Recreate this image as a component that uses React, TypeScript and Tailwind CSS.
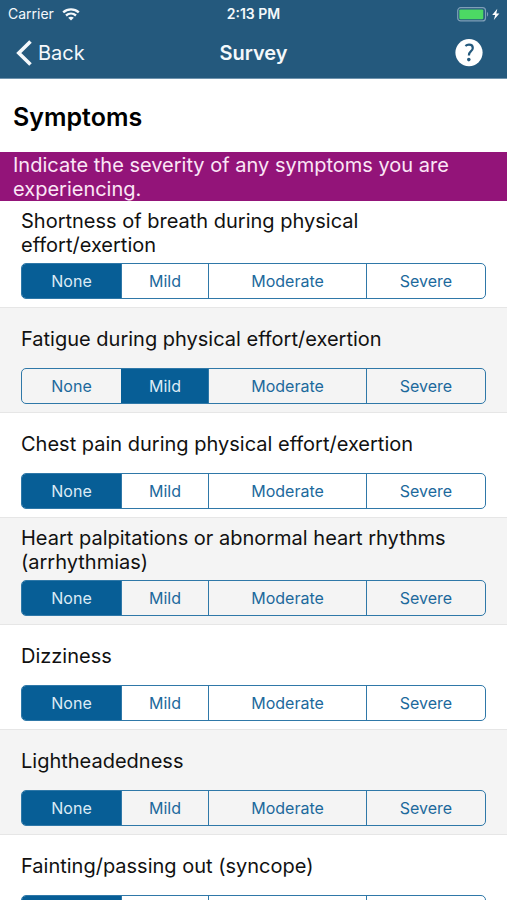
import { useState } from "react";

type Severity = "None" | "Mild" | "Moderate" | "Severe";

const LEVELS: Severity[] = ["None", "Mild", "Moderate", "Severe"];

const SYMPTOMS: { id: string; title: string; initial: Severity }[] = [
  { id: "breath", title: "Shortness of breath during physical effort/exertion", initial: "None" },
  { id: "fatigue", title: "Fatigue during physical effort/exertion", initial: "Mild" },
  { id: "chest", title: "Chest pain during physical effort/exertion", initial: "None" },
  { id: "heart", title: "Heart palpitations or abnormal heart rhythms (arrhythmias)", initial: "None" },
  { id: "dizziness", title: "Dizziness", initial: "None" },
  { id: "lightheaded", title: "Lightheadedness", initial: "None" },
  { id: "fainting", title: "Fainting/passing out (syncope)", initial: "None" },
];

function WifiIcon() {
  return (
    <svg className="h-[13px] w-[18px]" viewBox="0 0 18 13" fill="none" stroke="currentColor" strokeWidth="2.4" aria-hidden="true">
      <path d="M1.2 4.4C5.6.4 12.4.4 16.8 4.4" />
      <path d="M4 7.5c2.9-2.5 7.1-2.5 10 0" />
      <path d="M6.2 9.8c1.6-1.3 4-1.3 5.6 0L9 12.4z" fill="currentColor" stroke="none" />
    </svg>
  );
}

function BatteryIcon() {
  return (
    <svg className="h-[15px] w-[44px]" viewBox="0 0 44 15" aria-hidden="true">
      <rect x="0.7" y="0.7" width="27.8" height="13.2" rx="3" fill="none" stroke="#7f9fb8" strokeWidth="1.2" />
      <rect x="2.3" y="2.4" width="24" height="9.8" rx="1.2" fill="#4cd964" />
      <path d="M30 5c1.5.6 1.5 4 0 4.6z" fill="#7f9fb8" />
      <path d="M40.3 1.8 35.2 8h3l-1.4 5 5.6-6.6h-3.1z" fill="#fff" />
    </svg>
  );
}

function StatusBar() {
  return (
    <div className="grid h-7 grid-cols-[1fr_auto_1fr] items-center px-[6px] text-[14px] leading-5">
      <div className="flex items-center gap-2 pl-[2px]">
        <span>Carrier</span>
        <WifiIcon />
      </div>
      <span className="font-semibold">2:13 PM</span>
      <div className="flex justify-end">
        <BatteryIcon />
      </div>
    </div>
  );
}

function NavBar() {
  return (
    <nav className="grid h-[50px] grid-cols-[1fr_auto_1fr] items-center px-4">
      <button type="button" className="flex items-center gap-[6px] justify-self-start text-[20px] leading-6">
        <svg className="h-[26px] w-4" viewBox="0 0 16 26" fill="none" stroke="currentColor" strokeWidth="3.6" aria-hidden="true">
          <path d="M14.5 1.5 2.8 13l11.7 11.5" />
        </svg>
        Back
      </button>
      <h1 className="text-[20px] font-semibold leading-6">Survey</h1>
      <button type="button" aria-label="Help" className="justify-self-end px-2">
        <svg className="size-7" viewBox="0 0 28 28" aria-hidden="true">
          <circle cx="14" cy="13.6" r="13.6" fill="#fff" />
          <path
            d="M10.4 7c1-.9 2.2-1.3 3.6-1.3 2.3 0 3.8 1.3 3.8 3.2 0 1.5-.8 2.4-2 3.4-1.3 1.1-1.9 1.9-1.9 4.1"
            fill="none"
            stroke="#24597d"
            strokeWidth="2.2"
          />
          <circle cx="13.8" cy="20.6" r="1.8" fill="#24597d" />
        </svg>
      </button>
    </nav>
  );
}

function SymptomRow({ id, title, initial }: { id: string; title: string; initial: Severity }) {
  const [value, setValue] = useState<Severity>(initial);
  return (
    <li className="border-b border-[#e6e6e6] px-[21px] pb-2 odd:bg-white even:bg-[#f4f4f4]">
      <div className="flex min-h-[60px] items-center pb-[6px] pt-2">
        <h3 id={id} className="text-[20px] leading-6 text-[#111111]">
          {title}
        </h3>
      </div>
      <div
        role="radiogroup"
        aria-labelledby={id}
        className="grid h-9 grid-cols-[99fr_87fr_158fr_119fr] overflow-hidden rounded-[5px] border border-[#2f78a8]"
      >
        {LEVELS.map((level) => (
          <label
            key={level}
            className="relative flex cursor-pointer items-center justify-center border-l border-[#2f78a8] text-[16px] leading-5 text-[#1c699c] first:border-l-0 has-checked:border-[#075e96] has-checked:bg-[#075e96] has-checked:text-[#dcebf5]"
          >
            <input
              type="radio"
              name={id}
              value={level}
              checked={value === level}
              onChange={() => setValue(level)}
              className="sr-only"
            />
            {level}
          </label>
        ))}
      </div>
    </li>
  );
}

export default function App() {
  return (
    <div className="flex h-screen flex-col overflow-hidden bg-white font-['Inter','Liberation_Sans',sans-serif]">
      <header className="shrink-0 border-b border-[#6f93ad] bg-[#24597d] text-[#f4f8fb]">
        <StatusBar />
        <NavBar />
      </header>
      <main className="min-h-0 flex-1 overflow-y-auto [scrollbar-width:none]">
        <h2 className="px-[13px] pb-[19px] pt-[22px] text-[25px] font-semibold leading-8 text-black">Symptoms</h2>
        <p className="bg-[#931479] px-[13px] pt-px text-[20px] leading-6 text-[#fbe6f6]">
          Indicate the severity of any symptoms you are experiencing.
        </p>
        <ul>
          {SYMPTOMS.map((symptom) => (
            <SymptomRow key={symptom.id} {...symptom} />
          ))}
        </ul>
      </main>
    </div>
  );
}
